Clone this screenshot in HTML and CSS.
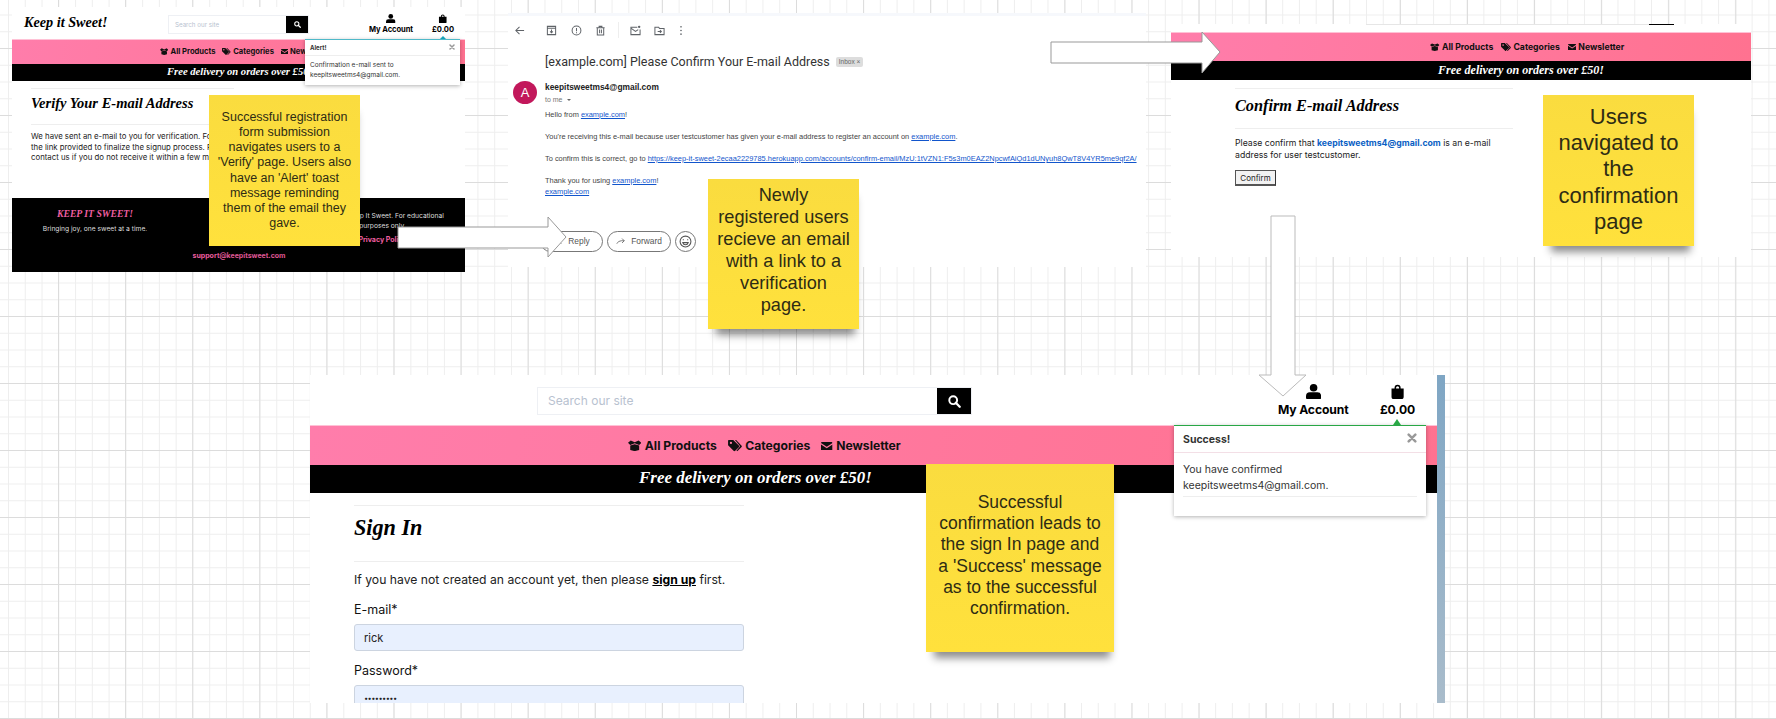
FILE: index.html
```html
<!DOCTYPE html>
<html lang="en">
<head>
  <meta charset="UTF-8">
  <title>Registration flow</title>
  <link rel="stylesheet" href="styles.css">
</head>
<body>
  <svg class="sprites" width="0" height="0">
    <symbol id="i-box" viewBox="0 0 24 20"><path d="M0 5 5 1l7 3 7-3 5 4-4 4-8-3-8 3zM4 10l8-2.500 8 2.500v8l-8 2-8-2z"/></symbol>
    <symbol id="i-tags" viewBox="0 0 24 20"><path fill-rule="evenodd" d="M1 0h8l10 10q1 1 0 2l-7 7q-1 1-2 0L0 9V1zm4 3a2 2 0 1 0 0 4 2 2 0 0 0 0-4zM12 0h2l9.500 10q1 1 0 2L16 19.500l-1.500-1L21 11z"/></symbol>
    <symbol id="i-mail" viewBox="0 0 24 18"><path d="M2 0h20a2 2 0 0 1 2 2L12 10 0 2a2 2 0 0 1 2-2zM0 5l12 8 12-8v11a2 2 0 0 1-2 2H2a2 2 0 0 1-2-2z"/></symbol>
    <symbol id="i-user" viewBox="0 0 20 20"><circle cx="10" cy="5" r="5"/><path d="M5 11h10a5 5 0 0 1 5 5v2a2 2 0 0 1-2 2H2a2 2 0 0 1-2-2v-2a5 5 0 0 1 5-5z"/></symbol>
    <symbol id="i-bag" viewBox="0 0 20 20"><path fill-rule="evenodd" d="M6 6V5a4 4 0 0 1 8 0v1h4v11a3 3 0 0 1-3 3H5a3 3 0 0 1-3-3V6zm2 0h4V5a2 2 0 0 0-4 0z"/></symbol>
    <symbol id="i-search" viewBox="0 0 20 20"><circle cx="8" cy="8" r="6" fill="none" stroke="currentColor" stroke-width="3"/><path d="m12 12 6 6" stroke="currentColor" stroke-width="3.500" stroke-linecap="round"/></symbol>
    <symbol id="i-close" viewBox="0 0 12 12"><path d="m2 2 8 8m0-8-8 8" stroke="currentColor" stroke-width="3" stroke-linecap="round"/></symbol>
  </svg>

  <!-- step 1: verify page -->
  <section class="site site-verify">
    <header class="site-header">
      <a class="brand">Keep it Sweet!</a>
      <div class="search"><span class="search-input">Search our site</span><span class="search-btn"><svg><use href="#i-search"/></svg></span></div>
      <div class="header-links">
        <a class="header-link"><svg><use href="#i-user"/></svg>My Account</a>
        <a class="header-link"><svg><use href="#i-bag"/></svg>£0.00</a>
      </div>
    </header>
    <nav class="site-nav">
      <a><svg class="ic-box"><use href="#i-box"/></svg>All Products</a>
      <a><svg class="ic-tags"><use href="#i-tags"/></svg>Categories</a>
      <a><svg class="ic-mail"><use href="#i-mail"/></svg>Newsletter</a>
    </nav>
    <div class="site-banner">Free delivery on orders over £50!</div>
    <main class="auth-box">
      <h2>Verify Your E-mail Address</h2>
      <p>We have sent an e-mail to you for verification. Follow the link provided to finalize the signup process. Please contact us if you do not receive it within a few minutes.</p>
    </main>
    <footer class="site-footer">
      <div class="foot-col">
        <h4>Keep it Sweet!</h4>
        <p>Bringing joy, one sweet at a time.</p>
      </div>
      <div class="foot-col foot-mid">
        <p><a>For enquiries:</a></p>
        <p><a>support@keepitsweet.com</a></p>
      </div>
      <div class="foot-col foot-right">
        <p>© 2024 Keep It Sweet. For educational purposes only.</p>
        <p><a>Privacy Policy</a></p>
      </div>
    </footer>
    <div class="toast toast-info">
      <div class="toast-head"><strong>Alert!</strong><svg><use href="#i-close"/></svg></div>
      <div class="toast-body">Confirmation e-mail sent to keepitsweetms4@gmail.com.</div>
    </div>
  </section>

  <!-- step 2: the email -->
  <section class="mail">
    <div class="mail-top"></div>
    <div class="mail-tools">
      <svg class="tool tool-back" viewBox="0 0 12 12"><path d="M11 6H2m4-4L2 6l4 4"/></svg>
      <svg class="tool tool-first" viewBox="0 0 12 12"><path d="M1.500 1.500h9v9h-9zM1.500 3.500h9M6 5v3.500M4.500 7 6 8.500 7.500 7"/></svg>
      <svg class="tool" viewBox="0 0 12 12"><circle cx="6" cy="6" r="4.800"/><path d="M6 3.200v3.500M6 8v1"/></svg>
      <svg class="tool" viewBox="0 0 12 12"><path d="M2.500 3h7v8h-7zM1.500 3h9M4.500 3V1.500h3V3M5 5v4M7 5v4"/></svg>
      <span class="tool-sep"></span>
      <svg class="tool" viewBox="0 0 12 12"><path d="M8 2.500H1v8h10V5M1 3.500 6 7l3-2"/><circle cx="10" cy="2" r="1.300" class="tool-dot"/></svg>
      <svg class="tool" viewBox="0 0 12 12"><path d="M1 2.500h4l1 1.200h5v6.800H1zM4 7h4M6.500 5.500 8 7 6.500 8.500"/></svg>
      <svg class="tool tool-more" viewBox="0 0 4 12"><circle cx="2" cy="2" r=".9" class="tool-dot"/><circle cx="2" cy="6" r=".9" class="tool-dot"/><circle cx="2" cy="10" r=".9" class="tool-dot"/></svg>
    </div>
    <div class="mail-subject">
      <h1>[example.com] Please Confirm Your E-mail Address</h1>
      <span class="mail-label">Inbox ×</span>
    </div>
    <div class="mail-from">
      <span class="avatar">A</span>
      <div>
        <div class="sender">keepitsweetms4@gmail.com</div>
        <div class="to-me">to me <i class="caret"></i></div>
      </div>
    </div>
    <div class="mail-body">
      Hello from <a>example.com</a>!<br><br>
      You're receiving this e-mail because user testcustomer has given your e-mail address to register an account on <a>example.com</a>.<br><br>
      To confirm this is correct, go to <a>https://keep-it-sweet-2ecaa2229785.herokuapp.com/accounts/confirm-email/MzU:1tVZN1:F5s3m0EAZ2NpcwfAiQd1dUNyuh8QwT8V4YR5me9qf2A/</a><br><br>
      Thank you for using <a>example.com</a>!<br>
      <a>example.com</a>
    </div>
    <div class="mail-actions">
      <span class="pill pill-reply"><svg viewBox="0 0 12 12"><path d="M11 9Q9 5 5 5H1m3-3L1 5l3 3"/></svg>Reply</span>
      <span class="pill pill-forward"><svg viewBox="0 0 12 12"><path d="M1 9q2-4 6-4h4M8 2l3 3-3 3"/></svg>Forward</span>
      <span class="pill pill-emoji"><svg viewBox="0 0 12 12"><circle cx="6" cy="6" r="5"/><path d="M3.500 7h5Q8 9 6 9T3.500 7zM4 4v.800M8 4v.800"/></svg></span>
    </div>
  </section>

  <!-- step 3: confirm page -->
  <section class="site site-confirm">
    <div class="crop-line"><span class="crop-input"></span><span class="crop-btn"></span></div>
    <nav class="site-nav">
      <a><svg class="ic-box"><use href="#i-box"/></svg>All Products</a>
      <a><svg class="ic-tags"><use href="#i-tags"/></svg>Categories</a>
      <a><svg class="ic-mail"><use href="#i-mail"/></svg>Newsletter</a>
    </nav>
    <div class="site-banner">Free delivery on orders over £50!</div>
    <main class="auth-box">
      <h2>Confirm E-mail Address</h2>
      <p>Please confirm that <a>keepitsweetms4@gmail.com</a> is an e-mail address for user testcustomer.</p>
      <button class="confirm-btn">Confirm</button>
    </main>
  </section>

  <!-- step 4: sign in page -->
  <section class="site site-signin">
    <div class="signin-page">
      <header class="site-header">
        <div class="search"><span class="search-input">Search our site</span><span class="search-btn"><svg><use href="#i-search"/></svg></span></div>
        <div class="header-links">
          <a class="header-link"><svg><use href="#i-user"/></svg>My Account</a>
          <a class="header-link"><svg><use href="#i-bag"/></svg>£0.00</a>
        </div>
      </header>
      <nav class="site-nav">
        <a><svg class="ic-box"><use href="#i-box"/></svg>All Products</a>
        <a><svg class="ic-tags"><use href="#i-tags"/></svg>Categories</a>
        <a><svg class="ic-mail"><use href="#i-mail"/></svg>Newsletter</a>
      </nav>
      <div class="site-banner">Free delivery on orders over £50!</div>
      <main class="auth-box">
        <h2>Sign In</h2>
        <p>If you have not created an account yet, then please <a>sign up</a> first.</p>
        <label>E-mail*</label>
        <div class="field">rick</div>
        <label>Password*</label>
        <div class="field field-pass">•••••••••</div>
      </main>
      <div class="toast toast-success">
        <div class="toast-head"><strong>Success!</strong><svg><use href="#i-close"/></svg></div>
        <div class="toast-body">You have confirmed keepitsweetms4@gmail.com.<hr></div>
      </div>
    </div>
    <div class="scrollbar"></div>
  </section>

  <!-- arrows between the steps -->
  <svg class="arrows" viewBox="0 0 1776 719">
    <polygon points="398,227 548,227 548,217 566,237 548,257 548,248 398,248"/>
    <polygon points="1051,42 1202,42 1202,32 1220,52 1202,73 1202,63 1051,63"/>
    <polygon class="arrow-light" points="1271,216 1295,216 1295,375 1306,375 1283,396 1259,375 1271,375"/>
  </svg>

  <!-- sticky notes -->
  <div class="note note-1">Successful registration form submission navigates users to a 'Verify' page. Users also have an 'Alert' toast message reminding them of the email they gave.</div>
  <div class="note note-2">Newly<br>registered users recieve an email with a link to a verification page.</div>
  <div class="note note-3">Users navigated to the confirmation page</div>
  <div class="note note-4">Successful confirmation leads to the sign In page and a 'Success' message as to the successful confirmation.</div>
</body>
</html>
```

FILE: styles.css
```css
body {
  margin: 0;
  height: 719px;
  overflow: hidden;
  position: relative;
  background-color: #fff;
  background-image:
    linear-gradient(to right, #dcdcdc 1px, transparent 1px),
    linear-gradient(to bottom, #dcdcdc 1px, transparent 1px),
    linear-gradient(to right, #eee 1px, transparent 1px),
    linear-gradient(to bottom, #eee 1px, transparent 1px);
  background-size: 67.1px 67px, 67.1px 67px, 16.775px 16.75px, 16.775px 16.75px;
  background-position: 58px 48px, 58px 48px, 8px 14.500px, 8px 14.500px;
  font-family: Inter, "Liberation Sans", sans-serif;
  color: #111;
}
.sprites {
  position: absolute;
}
svg {
  display: block;
}

/* the site screenshots */
.site {
  position: absolute;
  background: #fff;
  overflow: hidden;
}
.site-verify {
  left: 12px;
  top: 7px;
  width: 453px;
  height: 265px;
  font-size: 10px;
}
.site-confirm {
  left: 1171px;
  top: 24px;
  width: 580px;
  height: 233px;
  font-size: 11.400px;
}
.site-signin {
  left: 310px;
  top: 375px;
  width: 1135px;
  height: 328px;
  font-size: 16px;
  display: flex;
}
.signin-page {
  position: relative;
  width: 1127px;
  overflow: hidden;
}
.scrollbar {
  width: 8px;
  background: linear-gradient(#7fa6c4, #a9bccb);
}

.site-header {
  display: flex;
  height: 3.150em;
  box-sizing: border-box;
}
.brand {
  width: 138px;
  margin-left: 12px;
  font: italic bold 14.200px/31px "Liberation Serif", serif;
  color: #000;
  white-space: nowrap;
}
.search {
  display: flex;
  margin-top: 9px;
  height: 17px;
  width: 139px;
  margin-left: 7px;
  box-shadow: 0 0 0 1px #eef0f4;
}
.search-input {
  flex: 1;
  font-size: 6.200px;
  line-height: 17px;
  padding-left: 6px;
  color: #b8c2d0;
}
.search-btn {
  width: 22px;
  background: #000;
  color: #fff;
  display: flex;
  align-items: center;
  justify-content: center;
}
.search-btn svg {
  width: 7px;
  height: 7px;
  fill: #fff;
}
.site-signin .search {
  width: 433px;
  height: 26px;
  margin: 13px 0 0 228px;
}
.site-signin .search-input {
  font-size: 12px;
  line-height: 26px;
  padding-left: 10px;
}
.site-signin .search-btn {
  width: 34px;
}
.site-signin .search-btn svg {
  width: 13px;
  height: 13px;
}
.header-links {
  display: flex;
  margin-left: auto;
  margin-right: .300em;
  gap: .800em;
  padding-top: .650em;
}
.site-signin .header-links {
  margin-right: .570em;
  gap: .870em;
  padding-top: .560em;
}
.header-link {
  display: block;
  width: 6.580em;
  font-size: .760em;
  font-weight: 700;
  line-height: 1.250em;
  letter-spacing: -.01em;
  text-align: center;
  white-space: nowrap;
  color: #000;
}
.header-link + .header-link {
  width: 5em;
}
.header-link svg {
  width: 1.250em;
  height: 1.250em;
  margin: 0 auto .200em;
  fill: #000;
}

.site-nav {
  display: flex;
  align-items: center;
  height: 2.500em;
  box-sizing: border-box;
  border-top: 1px solid #ffc2d6;
  background: linear-gradient(100deg, #ff7dab, #ff7290);
  font-weight: 700;
  color: #111;
}
.site-nav a {
  display: flex;
  align-items: center;
  font-size: .760em;
  margin-right: .900em;
  white-space: nowrap;
}
.site-nav svg {
  fill: #111;
  margin-right: .280em;
}
.ic-box {
  width: 1.100em;
  height: .920em;
}
.ic-tags {
  width: 1.150em;
  height: .950em;
}
.ic-mail {
  width: .950em;
  height: .720em;
}
.site-banner {
  height: 1.650em;
  background: #000;
  color: #fff;
  font: italic bold 1.060em/1.500em "Liberation Serif", serif;
  white-space: nowrap;
}
.site-verify .site-nav {
  padding-left: 148px;
}
.site-verify .site-banner {
  padding-left: 155px;
}
.site-confirm .site-nav {
  padding-left: 259px;
}
.site-confirm .site-banner {
  padding-left: 267px;
}
.site-signin .site-nav {
  padding-left: 318px;
}
.site-signin .site-banner {
  padding-left: 329px;
}

/* page body */
.auth-box h2 {
  margin: 0;
  font: italic bold 1.620em/1.500em "Liberation Serif", serif;
  color: #000;
  border-top: 1px solid #eee;
  border-bottom: 1px solid #eee;
}
.auth-box p {
  margin: 0;
  color: #222;
}
.auth-box a {
  font-weight: 700;
}
.site-verify .auth-box {
  width: 203px;
  height: 117px;
  margin-left: 19px;
  padding-top: 7px;
  box-sizing: border-box;
}
.site-verify h2 {
  padding: 4px 0 9.200px;
  white-space: nowrap;
  font-size: 14.500px;
}
.site-verify .auth-box p {
  font-size: 7.800px;
  line-height: 10.500px;
  padding-top: 6.500px;
}
.site-confirm .auth-box {
  width: 278px;
  margin-left: 64px;
  padding-top: 8px;
}
.site-confirm h2 {
  padding: 5px 0 9px;
  font-size: 16.300px;
}
.site-confirm .auth-box p {
  font-size: 8.700px;
  line-height: 12px;
  padding-top: 8.500px;
}
.site-confirm .auth-box a {
  color: #0b5fc4;
}
.confirm-btn {
  display: block;
  width: 41px;
  height: 16px;
  margin-top: 9px;
  padding: 0;
  font: 8px Inter, sans-serif;
  background: #f2f2f2;
  color: #222;
  border: 1px solid #555;
  border-right-color: #333;
  border-bottom-width: 2px;
}
.site-signin .auth-box {
  width: 390px;
  margin-left: 44px;
  padding-top: 12px;
  font-size: 12.500px;
}
.site-signin h2 {
  padding: 4.600px 0 16.400px;
  font-size: 22.200px;
}
.site-signin .auth-box p {
  padding-top: 8.800px;
  line-height: 19px;
  font-size: 12.200px;
}
.site-signin .auth-box a {
  text-decoration: underline;
  color: #000;
}
.auth-box label {
  display: block;
  margin-top: 11.500px;
  line-height: 18px;
}
.field {
  height: 27px;
  margin-top: 5px;
  box-sizing: border-box;
  padding-left: 9px;
  background: #e8f0fe;
  border: 1px solid #ccd4e0;
  border-radius: 3px;
  font-size: 11px;
  line-height: 26px;
  color: #222;
}
.field-pass {
  font-size: 7.500px;
  letter-spacing: -.6px;
}

.site-footer {
  display: flex;
  height: 75px;
  background: #000;
  color: #ddd;
  text-align: center;
  font-size: 6.700px;
}
.foot-col {
  width: 166px;
}
.foot-col p {
  margin: 0;
}
.foot-col a {
  color: #ef5fa0;
  font-weight: 700;
  font-size: 7px;
}
.foot-col h4 {
  margin: 9px 0 3px;
  font: italic bold 9.700px/14px "Liberation Serif", serif;
  text-transform: uppercase;
  color: #ef5fa0;
}
.foot-col > p {
  line-height: 10px;
}
.foot-mid {
  width: 122px;
  padding-top: 37px;
}
.foot-mid.foot-col > p {
  line-height: 14px;
}
.foot-right {
  width: 165px;
  padding: 13px 12px 0;
  box-sizing: border-box;
}
.foot-right p + p {
  margin-top: 4px;
}

/* toasts */
.toast {
  position: absolute;
  background: #fff;
  box-shadow: 0 1px 4px rgba(0, 0, 0, .3);
  box-sizing: border-box;
}
.toast::before {
  content: "";
  position: absolute;
  border: 0 solid transparent;
  border-left-width: 3px;
  border-right-width: 3px;
}
.toast-head {
  display: flex;
  justify-content: space-between;
  color: #333;
  border-bottom: 1px solid #eee;
}
.toast-head svg {
  color: #999;
}
.toast-info {
  left: 293px;
  top: 32px;
  width: 155px;
  height: 46px;
  border-top: 1px solid #4fb9c9;
  font-size: 6.500px;
}
.toast-info::before {
  left: 135px;
  top: -4px;
  border-bottom: 3px solid #17a2b8;
}
.toast-info .toast-head {
  height: 16px;
  padding: 4px 5px 0;
  box-sizing: border-box;
  font-size: 6px;
}
.toast-info .toast-head svg {
  width: 6px;
  height: 6px;
}
.toast-info .toast-body {
  padding: 5px;
  line-height: 9.500px;
  color: #333;
}
.toast-success {
  left: 864px;
  top: 50px;
  width: 252px;
  height: 91px;
  border-top: 1px solid #28a745;
  font-size: 10.500px;
}
.toast-success::before {
  left: 219px;
  top: -7px;
  border-left-width: 4px;
  border-right-width: 4px;
  border-bottom: 6px solid #28a745;
}
.toast-success .toast-head {
  height: 27px;
  padding: 7px 9px 0;
  box-sizing: border-box;
  border-bottom-color: #f3dfe6;
}
.toast-success .toast-head svg {
  width: 10px;
  height: 10px;
}
.toast-success .toast-body {
  padding: 9px 9px 0;
  line-height: 15.500px;
  color: #333;
}
.toast-body hr {
  border: 0;
  border-top: 1px solid #eee;
  margin: 3px 0 0;
}

/* the email */
.mail {
  position: absolute;
  left: 508px;
  top: 13px;
  width: 638px;
  height: 254px;
  background: #fff;
  font: 8.400px/11px "Liberation Sans", sans-serif;
  color: #444;
  overflow: hidden;
}
.mail-top {
  height: 3px;
  background: #f6f8fc;
}
.mail-tools {
  display: flex;
  align-items: center;
  height: 28px;
}
.tool {
  width: 11px;
  height: 11px;
  margin-right: 13.500px;
  fill: none;
  stroke: #5f6368;
  stroke-width: 1.100;
}
.tool-dot {
  fill: #5f6368;
  stroke: none;
}
.tool-back {
  margin-left: 6px;
  margin-right: 21px;
}
.tool-sep {
  width: 1px;
  height: 16px;
  background: #eee;
  margin: 0 11px 0 -2px;
}
.tool-more {
  width: 4px;
}
.mail-subject {
  display: flex;
  align-items: center;
  height: 22px;
  margin: 7px 0 0 37px;
}
.mail-subject h1 {
  margin: 0;
  font: 400 12.500px/22px Roboto, sans-serif;
  color: #333;
  white-space: nowrap;
}
.mail-label {
  margin-left: 6px;
  padding: 0 3px;
  border-radius: 2px;
  background: #ddd;
  color: #666;
  font-size: 6.500px;
  line-height: 10px;
}
.mail-from {
  display: flex;
  margin: 8px 0 0 5px;
}
.avatar {
  width: 24px;
  height: 23px;
  margin-right: 8px;
  border-radius: 50%;
  background: #c2185b;
  color: #fff;
  text-align: center;
  font-size: 13px;
  line-height: 23px;
}
.sender {
  font-weight: 700;
  color: #222;
  line-height: 12px;
  margin-top: 0;
}
.to-me {
  margin-top: 1px;
  font-size: 7px;
  color: #777;
  line-height: 12px;
}
.caret {
  display: inline-block;
  margin-left: 3px;
  vertical-align: middle;
  border: 2.500px solid transparent;
  border-top-color: #666;
  border-bottom: 0;
}
.mail-body {
  margin: 3px 0 0 37px;
  font-size: 7.430px;
  white-space: nowrap;
}
.mail-body a {
  color: #1155cc;
  text-decoration: underline;
}
.mail-actions {
  display: flex;
  gap: 4px;
  margin: 34px 0 0 32px;
}
.pill {
  display: flex;
  align-items: center;
  justify-content: center;
  gap: 6px;
  height: 21px;
  box-sizing: border-box;
  border: 1px solid #777;
  border-radius: 11px;
  color: #555;
}
.pill svg {
  width: 9px;
  height: 9px;
  fill: none;
  stroke: #555;
  stroke-width: 1;
}
.pill-reply {
  width: 63px;
}
.pill-forward {
  width: 64px;
}
.pill-emoji {
  width: 21px;
}
.pill-emoji svg {
  width: 13px;
  height: 13px;
}

/* crop of the header above the confirm page */
.crop-line {
  display: flex;
  align-items: flex-start;
  height: 8px;
  padding-left: 195px;
}
.crop-input {
  width: 283px;
  border-bottom: 1px solid #e6e6e6;
}
.crop-btn {
  width: 25px;
  height: 1px;
  background: #000;
}

/* arrows and notes over everything */
.arrows {
  position: absolute;
  left: 0;
  top: 0;
  width: 1776px;
  height: 719px;
  pointer-events: none;
}
.arrows polygon {
  fill: #fff;
  stroke: #999;
  stroke-width: 1;
}
.arrows .arrow-light {
  stroke: #bbb;
}
.note {
  position: absolute;
  display: flex;
  align-items: center;
  justify-content: center;
  box-sizing: border-box;
  text-align: center;
  font-family: "Liberation Sans", Arial, sans-serif;
  color: #2e2c14;
  background: linear-gradient(#fadc3f, #ffe13c);
  box-shadow: 2px 12px 8px -6px rgba(0, 0, 0, .45);
}
.note-1 {
  left: 209px;
  top: 95px;
  width: 151px;
  height: 151px;
  padding: 0 6px;
  font-size: 12.500px;
  line-height: 15.200px;
}
.note-2 {
  left: 708px;
  top: 179px;
  width: 151px;
  height: 150px;
  padding: 0 8px 8px;
  font-size: 18.200px;
  line-height: 22px;
}
.note-3 {
  left: 1543px;
  top: 95px;
  width: 151px;
  height: 151px;
  padding: 0 10px 2px;
  font-size: 22px;
  line-height: 26.200px;
}
.note-4 {
  left: 926px;
  top: 464px;
  width: 188px;
  height: 188px;
  padding: 0 10px 5px;
  font-size: 17.500px;
  line-height: 21.100px;
}
```
